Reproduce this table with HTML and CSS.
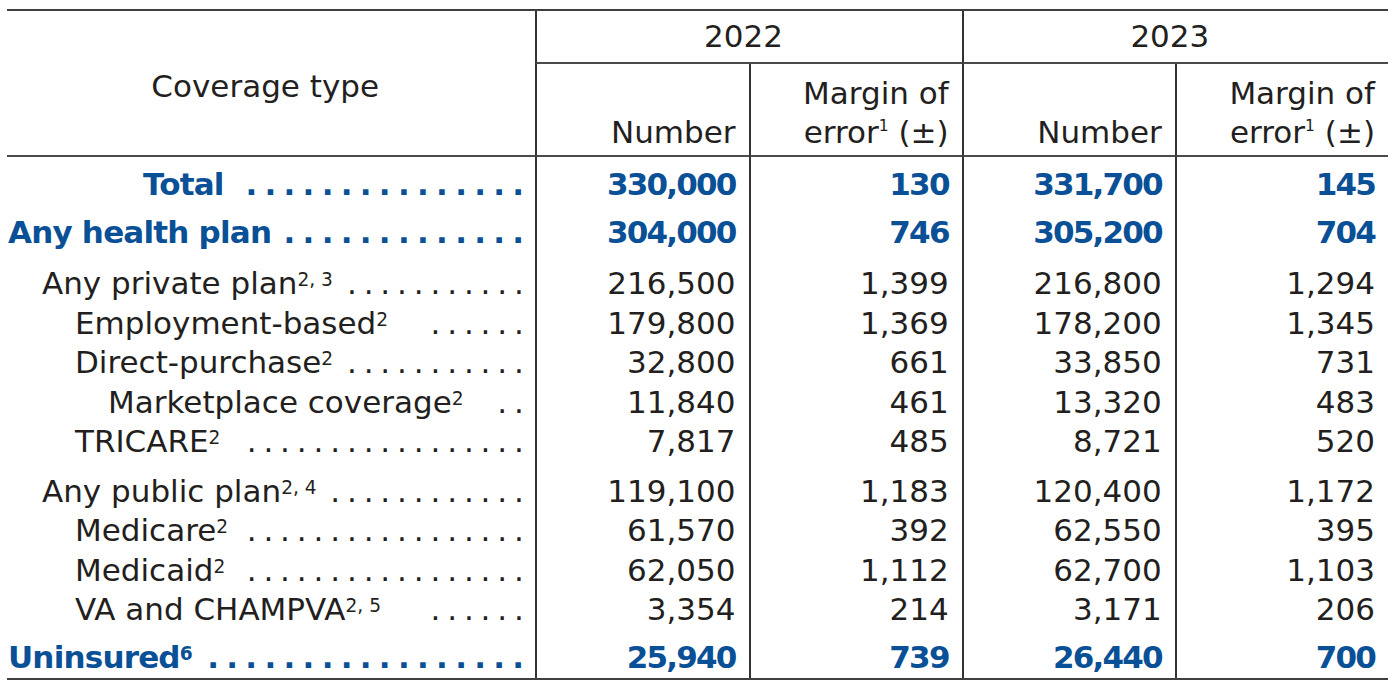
FILE: index.html
```html
<!DOCTYPE html>
<html lang="en">
<head>
<meta charset="utf-8">
<title>Coverage type</title>
<link rel="stylesheet" href="styles.css">
</head>
<body>
<table class="cov">
  <colgroup>
    <col class="c-label">
    <col class="c-num">
    <col class="c-num">
    <col class="c-num">
    <col class="c-num">
  </colgroup>
  <thead>
    <tr class="h-row1">
      <th class="h-type" rowspan="2">Coverage type</th>
      <th class="h-year bl" colspan="2">2022</th>
      <th class="h-year bl" colspan="2">2023</th>
    </tr>
    <tr class="h-row2">
      <th class="h-sub bl">Number</th>
      <th class="h-sub bl">Margin of<br>error<sup>1</sup> (±)</th>
      <th class="h-sub bl">Number</th>
      <th class="h-sub bl">Margin of<br>error<sup>1</sup> (±)</th>
    </tr>
  </thead>
  <tbody>
    <tr class="bold gap-8">
      <td class="lab"><div class="lead ind-total"><span class="txt">Total</span><span class="dots">. . . . . . . . . . . . . . .</span></div></td>
      <td class="num bl">330,000</td><td class="num bl">130</td><td class="num bl">331,700</td><td class="num bl">145</td>
    </tr>
    <tr class="bold gap-8h">
      <td class="lab"><div class="lead ind-0"><span class="txt">Any health plan</span><span class="dots">. . . . . . . . . . . . .</span></div></td>
      <td class="num bl">304,000</td><td class="num bl">746</td><td class="num bl">305,200</td><td class="num bl">704</td>
    </tr>
    <tr class="gap-11">
      <td class="lab"><div class="lead ind-1"><span class="txt">Any private plan<sup>2, 3</sup></span><span class="dots">. . . . . . . . . . .</span></div></td>
      <td class="num bl">216,500</td><td class="num bl">1,399</td><td class="num bl">216,800</td><td class="num bl">1,294</td>
    </tr>
    <tr>
      <td class="lab"><div class="lead ind-2"><span class="txt">Employment-based<sup>2</sup></span><span class="dots">. . . . . .</span></div></td>
      <td class="num bl">179,800</td><td class="num bl">1,369</td><td class="num bl">178,200</td><td class="num bl">1,345</td>
    </tr>
    <tr>
      <td class="lab"><div class="lead ind-2"><span class="txt">Direct-purchase<sup>2</sup></span><span class="dots">. . . . . . . . . . .</span></div></td>
      <td class="num bl">32,800</td><td class="num bl">661</td><td class="num bl">33,850</td><td class="num bl">731</td>
    </tr>
    <tr>
      <td class="lab"><div class="lead ind-3"><span class="txt">Marketplace coverage<sup>2</sup></span><span class="dots">. .</span></div></td>
      <td class="num bl">11,840</td><td class="num bl">461</td><td class="num bl">13,320</td><td class="num bl">483</td>
    </tr>
    <tr>
      <td class="lab"><div class="lead ind-2"><span class="txt">TRICARE<sup>2</sup></span><span class="dots">. . . . . . . . . . . . . . . . .</span></div></td>
      <td class="num bl">7,817</td><td class="num bl">485</td><td class="num bl">8,721</td><td class="num bl">520</td>
    </tr>
    <tr class="gap-10">
      <td class="lab"><div class="lead ind-1"><span class="txt">Any public plan<sup>2, 4</sup></span><span class="dots">. . . . . . . . . . . .</span></div></td>
      <td class="num bl">119,100</td><td class="num bl">1,183</td><td class="num bl">120,400</td><td class="num bl">1,172</td>
    </tr>
    <tr>
      <td class="lab"><div class="lead ind-2"><span class="txt">Medicare<sup>2</sup></span><span class="dots">. . . . . . . . . . . . . . . . .</span></div></td>
      <td class="num bl">61,570</td><td class="num bl">392</td><td class="num bl">62,550</td><td class="num bl">395</td>
    </tr>
    <tr>
      <td class="lab"><div class="lead ind-2"><span class="txt">Medicaid<sup>2</sup></span><span class="dots">. . . . . . . . . . . . . . . . .</span></div></td>
      <td class="num bl">62,050</td><td class="num bl">1,112</td><td class="num bl">62,700</td><td class="num bl">1,103</td>
    </tr>
    <tr>
      <td class="lab"><div class="lead ind-2"><span class="txt">VA and CHAMPVA<sup>2, 5</sup></span><span class="dots">. . . . . .</span></div></td>
      <td class="num bl">3,354</td><td class="num bl">214</td><td class="num bl">3,171</td><td class="num bl">206</td>
    </tr>
    <tr class="bold gap-8h">
      <td class="lab"><div class="lead ind-0"><span class="txt">Uninsured<sup>6</sup></span><span class="dots">. . . . . . . . . . . . . . . . .</span></div></td>
      <td class="num bl">25,940</td><td class="num bl">739</td><td class="num bl">26,440</td><td class="num bl">700</td>
    </tr>
  </tbody>
</table>
</body>
</html>
```
FILE: styles.css
```css
html, body {
  margin: 0;
  padding: 0;
  background: #ffffff;
}

body {
  font-family: "DejaVu Sans", "Liberation Sans", sans-serif;
  font-size: 31px;
  color: #231f20;
}

.cov {
  margin: 9px 0 0 7px;
  width: 1381px;
  table-layout: fixed;
  border-collapse: separate;
  border-spacing: 0;
  border-top: 2px solid #3f3f3f;
  border-bottom: 2px solid #3f3f3f;
}

.c-label { width: 528px; }
.c-num { width: 213px; }

th, td {
  padding: 0;
  font-weight: normal;
}

.bl { border-left: 2px solid #333333; }

.h-type {
  text-align: center;
  vertical-align: middle;
  padding: 6px 12px 0 0;
  border-bottom: 2px solid #4a4a4a;
  line-height: 39px;
}

.h-year {
  height: 51px;
  text-align: center;
  vertical-align: middle;
  padding: 0 12px 0 0;
  border-bottom: 2px solid #4a4a4a;
  line-height: 39px;
}

.h-sub {
  height: 88px;
  text-align: right;
  vertical-align: bottom;
  padding: 0 13px 3px 0;
  border-bottom: 2px solid #4a4a4a;
  line-height: 39px;
}

sup {
  font-size: 0.6em;
  line-height: 0;
  vertical-align: 0.45em;
}

.h-sub sup {
  font-size: 0.5em;
  vertical-align: 0.75em;
}

tbody td {
  line-height: 39.5px;
  vertical-align: top;
}

.num {
  text-align: right;
  padding-right: 13px;
  white-space: nowrap;
}

.gap-8 td { padding-top: 8px; }
.gap-8h td { padding-top: 8.5px; }
.gap-11 td { padding-top: 11.5px; }
.gap-10 td { padding-top: 10px; }

.lab {
  padding-right: 13px;
}

.lead {
  display: flex;
  align-items: baseline;
  white-space: nowrap;
}

.txt {
  flex: none;
}

.dots {
  flex: none;
  margin-left: auto;
  letter-spacing: -1.5px;
}

.ind-0 { padding-left: 1px; }
.ind-1 { padding-left: 35px; }
.ind-2 { padding-left: 68px; }
.ind-3 { padding-left: 101px; }
.ind-total { padding-left: 136px; }

.bold td {
  color: #0a5096;
  font-weight: bold;
}

.bold .num {
  letter-spacing: -1.8px;
}

.bold .txt {
  letter-spacing: -0.8px;
}

.bold .dots {
  letter-spacing: -1.75px;
}
```
